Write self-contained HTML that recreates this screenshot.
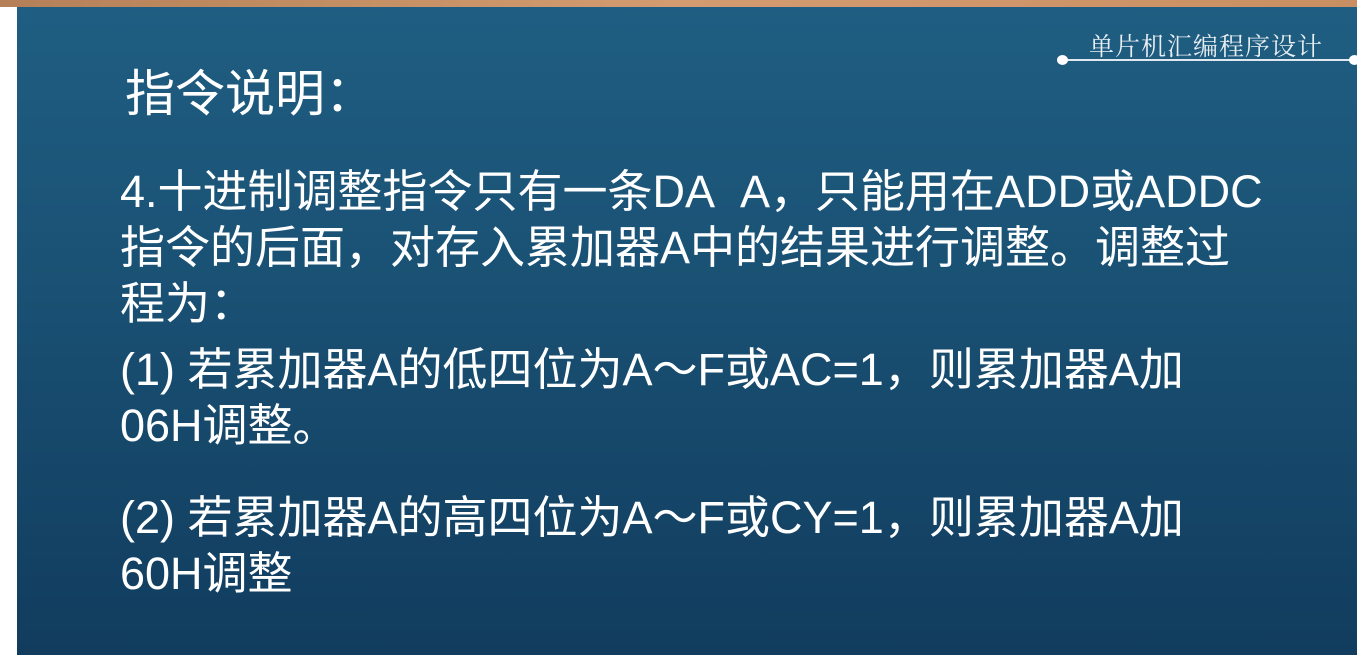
<!DOCTYPE html>
<html><head><meta charset="utf-8"><style>
html,body{margin:0;padding:0;width:1357px;height:655px;overflow:hidden;background:#fff}
.slide{position:absolute;left:17px;top:0;width:1340px;height:655px;background:linear-gradient(#1f5e82,#1a5275 40%,#113c5e);}
.top{position:absolute;left:0;top:0;width:1357px;height:7px;background:linear-gradient(90deg,#b58058,#d39c70 50%,#c98f63)}
.t{position:absolute;color:#fff;font-family:"Liberation Sans","Noto Sans CJK SC",sans-serif;white-space:nowrap}
.sub{position:absolute;left:1089px;top:27px;font-family:"Liberation Serif","Noto Serif CJK SC",serif;font-size:25px;color:#e8eef2;letter-spacing:1px}
.line{position:absolute;left:1063px;top:59px;width:294px;height:2px;background:#dfe9ef}
.dot{position:absolute;top:55px;width:11px;height:10px;border-radius:50%;background:#fff}
.body{font-size:45px;line-height:56px;transform:scaleY(1.0)}
</style></head><body>
<div class="slide"></div>
<div class="top"></div>
<div class="sub">单片机汇编程序设计</div>
<div class="line"></div>
<div class="dot" style="left:1057px"></div>
<div class="dot" style="left:1349px"></div>
<div class="t" style="left:125px;top:64px;font-size:50px;line-height:60px">指令说明：</div>
<div class="t body" style="left:120px;top:164px">4.十进制调整指令只有一条DA&nbsp;&nbsp;A，只能用在ADD或ADDC<br>指令的后面，对存入累加器A中的结果进行调整。调整过<br>程为：</div>
<div class="t body" style="left:120px;top:342px">(1) 若累加器A的低四位为A～F或AC=1，则累加器A加<br>06H调整。</div>
<div class="t body" style="left:120px;top:490px">(2) 若累加器A的高四位为A～F或CY=1，则累加器A加<br>60H调整</div>
</body></html>
